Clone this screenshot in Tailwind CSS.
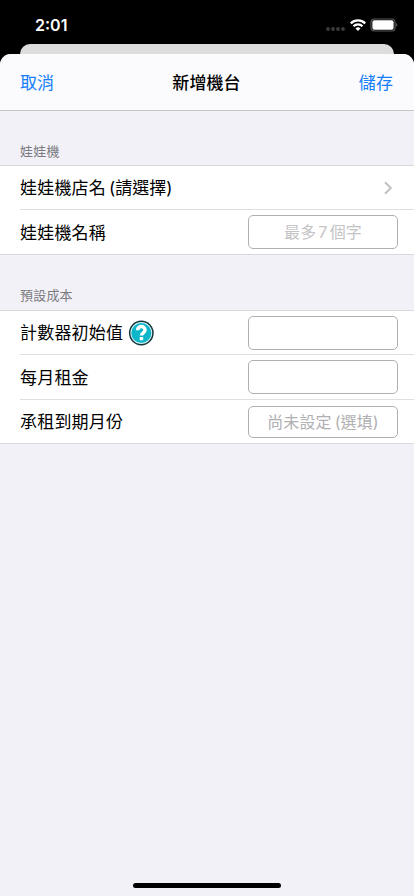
<!DOCTYPE html>
<html lang="zh-Hant">
<head>
  <meta charset="UTF-8" />
  <meta name="viewport" content="width=device-width, initial-scale=1.0">
  <title>新增機台</title>
  <script src="https://cdn.jsdelivr.net/npm/@tailwindcss/browser@4"></script>
</head>
<body class="bg-black text-black font-['Inter','Noto_Sans_CJK_TC',sans-serif] antialiased">
<div class="w-[414px] h-[896px] flex flex-col overflow-hidden bg-black">

  <!-- Status bar -->
  <div class="h-11 shrink-0 flex justify-between pl-[35px] pr-4 pt-[13px]">
    <span class="text-[16px] leading-6 font-semibold text-white">2:01</span>
    <div class="flex items-start gap-1 pt-[5px]">
      <svg class="w-5 h-[14px]" viewBox="0 0 20 14" fill="#3c3c3e">
        <circle cx="2" cy="11" r="1.9"/><circle cx="7" cy="11" r="1.9"/><circle cx="12" cy="11" r="1.9"/><circle cx="17" cy="11" r="1.9"/>
      </svg>
      <svg class="w-4 h-3 mt-px" viewBox="0 0 16 12" fill="none" stroke="#fff" stroke-width="2.3">
        <path d="M.8 4.4a10.2 10.2 0 0 1 14.4 0"/>
        <path d="M3.5 7.3a6.3 6.3 0 0 1 9 0"/>
        <path d="M8 11.9 5.5 9.5a3.5 3.5 0 0 1 5 0z" fill="#fff" stroke="none"/>
      </svg>
      <svg class="w-7 h-[14px]" viewBox="0 0 28 14">
        <rect x="1" y="1" width="24" height="12" rx="3.4" fill="none" stroke="#59595b" stroke-width="1.2"/>
        <rect x="2.4" y="2.3" width="21.2" height="9.4" rx="2" fill="#fff"/>
        <path d="M26.3 5v4c1.5-.6 1.5-3.4 0-4z" fill="#6a6a6c"/>
      </svg>
    </div>
  </div>

  <!-- Edge of the page behind the sheet -->
  <div class="h-[10px] shrink-0 mx-5 rounded-t-[10px] bg-[#dddddd]"></div>

  <!-- Sheet -->
  <div class="flex-1 flex flex-col rounded-t-[11px] bg-[#f2f1f7] overflow-hidden">
    <header class="h-[57px] shrink-0 flex items-center justify-between pt-[3px] px-5 bg-[#fbfbfd] border-b border-[#c6c6c9] text-[17px] tracking-[0.1px]">
      <button class="text-[#157efb]">取消</button>
      <h1 class="font-medium">新增機台</h1>
      <button class="text-[#157efb] mr-px">儲存</button>
    </header>

    <h2 class="h-[54px] shrink-0 pl-5 pt-[30px] text-[13px] leading-5 tracking-[0.2px] text-[#7a7a7f]">娃娃機</h2>
    <section class="bg-white border-y border-[#d9d9dd] text-[17px] tracking-[0.2px]">
      <div class="ml-5 h-11 flex items-center justify-between pr-[21px] border-b border-[#dfdfe2]">
        <span class="pt-0.5">娃娃機店名<span class="ml-[3px] tracking-normal">(請選擇)</span></span>
        <svg class="w-[10px] h-[14px]" viewBox="0 0 10 14" fill="none" stroke="#c2c2c5" stroke-width="2">
          <path d="M2 1.2 7.8 7 2 12.8"/>
        </svg>
      </div>
      <div class="ml-5 h-11 flex items-center justify-between pr-4">
        <span class="pt-[3px]">娃娃機名稱</span>
        <div class="w-[150px] h-[34px] flex items-center justify-center rounded-[5px] border border-[#b0b0b0] text-[16px] text-[#c4c4c6]">最多<span class="mx-0.5">7</span>個字</div>
      </div>
    </section>

    <h2 class="h-[55px] shrink-0 pl-5 pt-[30px] text-[13px] leading-5 tracking-[0.2px] text-[#7a7a7f]">預設成本</h2>
    <section class="bg-white border-y border-[#d9d9dd] text-[17px] tracking-[0.2px]">
      <div class="ml-5 h-11 flex items-center justify-between pr-4 border-b border-[#dfdfe2]">
        <div class="flex items-center gap-[5px]">
          <span class="pt-[3px]">計數器初始值</span>
          <svg class="w-[26px] h-[26px]" viewBox="0 0 26 26">
            <circle cx="13.3" cy="13" r="12.4" fill="#15333e"/>
            <circle cx="13.3" cy="13" r="10.9" fill="#d8f4f6"/>
            <circle cx="13.3" cy="13" r="10" fill="#0db7c9"/>
            <path d="M9.6 10.3c.1-5.2 7.5-5 7.4-.1-.1 2.7-3.5 2.5-3.5 5.4" fill="none" stroke="#fff" stroke-width="3.5"/>
            <rect x="11.7" y="17" width="3.5" height="3.3" rx=".5" fill="#fff"/>
          </svg>
        </div>
        <div class="w-[150px] h-[34px] rounded-[5px] border border-[#b0b0b0]"></div>
      </div>
      <div class="ml-5 h-[45px] flex items-center justify-between pr-4 border-b border-[#dfdfe2]">
        <span class="pt-[3px]">每月租金</span>
        <div class="w-[150px] h-[34px] rounded-[5px] border border-[#b0b0b0]"></div>
      </div>
      <div class="ml-5 h-[43px] flex items-center justify-between pr-4">
        <span class="pt-0.5">承租到期月份</span>
        <div class="w-[150px] h-8 flex items-center justify-center rounded-[5px] border border-[#b0b0b0] text-[16px] tracking-[0.1px] text-[#b0b0b2]">尚未設定<span class="ml-[3px]">(選填)</span></div>
      </div>
    </section>

    <!-- Home indicator -->
    <div class="mt-auto mb-2 mx-auto w-[148px] h-[5px] rounded-full bg-black"></div>
  </div>
</div>
</body>
</html>
